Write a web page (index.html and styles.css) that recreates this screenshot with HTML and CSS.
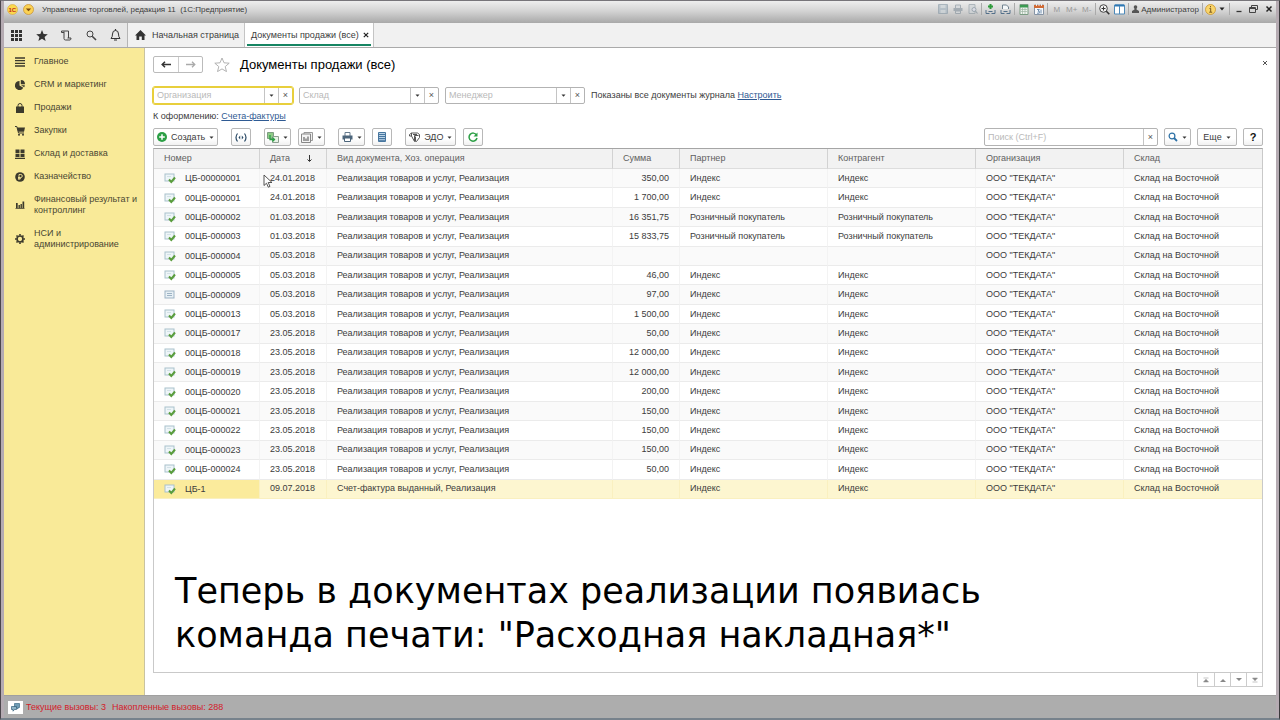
FILE: index.html
```html
<!DOCTYPE html>
<html lang="ru">
<head>
<meta charset="utf-8">
<title>Документы продажи (все)</title>
<link rel="stylesheet" href="styles.css">
</head>
<body>
<svg class="defs" aria-hidden="true">
  <symbol id="doc-posted" viewBox="0 0 12 12">
    <rect x="1" y="2" width="9" height="7" fill="#eef5f8" stroke="#a9c2cc"/>
    <path d="M3 4.500h4" stroke="#d3e1e7"/>
    <path d="M5 7.500l2.300 2.500L11 5.500" fill="none" stroke="#5a9d3c" stroke-width="2"/>
  </symbol>
  <symbol id="doc-plain" viewBox="0 0 12 12">
    <rect x="1" y="2" width="9" height="7" fill="#e8f0f5" stroke="#9db3c4"/>
    <path d="M3 4.500h5M3 6.500h5" stroke="#9db3c4"/>
  </symbol>
  <symbol id="caret" viewBox="0 0 5 3"><path d="M0.500 0.500h4L2.500 2.700z" fill="#333"/></symbol>
</svg>
<div class="window">
  <header class="titlebar">
    <button class="round" aria-label="1С"><svg width="11" height="11" viewBox="0 0 11 11"><circle cx="5.500" cy="5.500" r="5" fill="#fbd84e" stroke="#d9a93a" stroke-width=".6"/><text x="1.500" y="7.500" class="logo-text">1С</text></svg></button>
    <button class="round" aria-label="Главное меню"><svg width="11" height="11" viewBox="0 0 11 11"><circle cx="5.500" cy="5.500" r="5" fill="#fbd253" stroke="#c9963a" stroke-width=".8"/><path d="M2.800 4.500h5.400L5.500 7.300z" fill="#7a4a10"/></svg></button>
    <span class="window-title">Управление торговлей, редакция 11&nbsp; (1С:Предприятие)</span>
    <div class="title-tools">
      <button class="tool dim" aria-label="Сохранить"><svg width="10" height="10" viewBox="0 0 10 10"><path d="M.5.500h9v9h-9z" fill="#9fb0bd" stroke="#8496a4"/><path d="M2.500 1h5v3h-5zM2.500 6h5v3h-5z" fill="#c9d2d8"/></svg></button>
      <button class="tool dim" aria-label="Печать"><svg width="10" height="10" viewBox="0 0 10 10"><path d="M2.500 4V1h5v3M2.500 7h5v2.500h-5z" fill="#d3d8dc" stroke="#82909b"/><path d="M.5 4h9v3h-9z" fill="#82909b"/></svg></button>
      <button class="tool dim" aria-label="Просмотр"><svg width="10" height="10" viewBox="0 0 10 10"><path d="M1 .5h6v9H1z" fill="#cdd3d7" stroke="#8b98a1"/><circle cx="6" cy="5.500" r="2" fill="#dde" stroke="#778995"/><path d="M7.500 7l2 2.500" stroke="#778995" stroke-width="1.200"/></svg></button>
      <i class="sep"></i>
      <button class="tool" aria-label="Добавить ссылку"><svg width="11" height="11" viewBox="0 0 11 11"><path d="M5.500 0v5M3 2.500h5" stroke="#2d9a3a" stroke-width="2"/><path d="M1 6v3.500h3.500M10 6v3.500H6.500M3.500 7.500h4" fill="none" stroke="#54708a"/></svg></button>
      <button class="tool" aria-label="Перейти по ссылке"><svg width="11" height="11" viewBox="0 0 11 11"><path d="M2.500 5V1h4l2 2v2" fill="#f4f7f9" stroke="#71828f"/><path d="M1 6v3.500h3.500M10 6v3.500H6.500M3.500 7.500h4" fill="none" stroke="#54708a"/></svg></button>
      <i class="sep"></i>
      <button class="tool" aria-label="Калькулятор"><svg width="10" height="11" viewBox="0 0 10 11"><path d="M1 .5h8v10H1z" fill="#eef3ee" stroke="#7b9c83"/><path d="M1 1h8v2.500H1z" fill="#3b9a52"/><path d="M2 5.500h6M2 7.500h6M3.500 4v6M6 4v6" stroke="#9fb5a4" stroke-width=".7"/></svg></button>
      <button class="tool" aria-label="Календарь"><svg width="10" height="11" viewBox="0 0 10 11"><path d="M.5 1h9v9.500h-9z" fill="#f6f8fb" stroke="#8694a5"/><path d="M0 1h10v3H0z" fill="#cf6a35"/><path d="M2.500 0v2M5 0v2M7.500 0v2" stroke="#fff" stroke-width=".8"/><path d="M3 5.500h2.300L4 7.200h1.300v2H3M7 5.500v4" fill="none" stroke="#51779f" stroke-width=".8"/></svg></button>
      <i class="sep"></i>
      <button class="tool mem">M</button><button class="tool mem">M+</button><button class="tool mem">M-</button>
      <i class="sep"></i>
      <button class="tool" aria-label="Масштаб"><svg width="11" height="11" viewBox="0 0 11 11"><circle cx="4.500" cy="4.500" r="3.800" fill="#f4f4f4" stroke="#444"/><path d="M2.500 4.500h4M4.500 2.500v4" stroke="#333"/><path d="M7.300 7.300l3 3" stroke="#333" stroke-width="1.600"/></svg></button>
      <button class="tool" aria-label="Панели"><svg width="11" height="11" viewBox="0 0 11 11"><path d="M.5 1h10v9H.5z" fill="#fff" stroke="#4d89b8"/><path d="M1 1.500h9" stroke="#2e78b4" stroke-width="2"/><path d="M5.500 2v8" stroke="#4d89b8"/></svg></button>
      <i class="sep"></i>
      <button class="user"><svg width="7" height="8" viewBox="0 0 7 8"><circle cx="3.500" cy="2" r="1.800" fill="#555"/><path d="M2.500 3h2v1.500L7 6v2H0V6l2.500-1.500z" fill="#555"/></svg>Администратор</button>
      <i class="sep"></i>
      <button class="small-tool" aria-label="Информация"><svg width="11" height="11" viewBox="0 0 11 11"><circle cx="5.500" cy="5.500" r="5" fill="#f9d56b" stroke="#c9962f" stroke-width=".8"/><path d="M4.500 4.500h1.200v3.500M4.200 8.200h3M5.500 2v1.300" fill="none" stroke="#7a5a20"/></svg></button>
      <button class="small-tool" aria-label="Ещё"><svg width="6" height="4" viewBox="0 0 6 4"><path d="M.5.500h5L3 3.500z" fill="#222"/></svg></button>
      <i class="sep"></i>
      <button class="tool" aria-label="Свернуть"><svg width="8" height="8" viewBox="0 0 8 8"><path d="M1.500 6.500h5" stroke="#333" stroke-width="1.300"/></svg></button>
      <button class="tool" aria-label="Восстановить"><svg width="9" height="8" viewBox="0 0 9 8"><path d="M2.500 2.500v-2h6v4h-2M.5 2.500h6v5h-6zM.5 3.500h6" fill="none" stroke="#444"/></svg></button>
      <button class="tool" aria-label="Закрыть окно"><svg width="8" height="8" viewBox="0 0 8 8"><path d="M1.500 1.500l5 5M6.500 1.500l-5 5" stroke="#222" stroke-width="1.500"/></svg></button>
    </div>
  </header>

  <nav class="tabs">
    <div class="quick">
      <button aria-label="Меню функций"><svg width="11" height="11" viewBox="0 0 11 11" fill="#333"><path d="M0 0h3v3H0zM4 0h3v3H4zM8 0h3v3H8zM0 4h3v3H0zM4 4h3v3H4zM8 4h3v3H8zM0 8h3v3H0zM4 8h3v3H4zM8 8h3v3H8z"/></svg></button>
      <button aria-label="Избранное"><svg width="12" height="11" viewBox="0 0 12 11"><path d="M6 0l1.600 3.900 4.200.3-3.200 2.700 1 4.100L6 8.800 2.400 11l1-4.100L.2 4.200l4.200-.3z" fill="#333"/></svg></button>
      <button aria-label="История"><svg width="11" height="11" viewBox="0 0 11 11" fill="none" stroke="#444"><path d="M.5 1H7.500V8M3 1.500V8.500Q3 10 4.500 10H9q1 0 1-2H6.500M.5 1v1.500H3"/></svg></button>
      <button aria-label="Поиск"><svg width="11" height="11" viewBox="0 0 11 11" fill="none" stroke="#444"><circle cx="4" cy="4" r="3"/><path d="M6.200 6.200L10 10" stroke-width="1.600"/></svg></button>
      <button aria-label="Уведомления"><svg width="11" height="12" viewBox="0 0 11 12"><path d="M1 9.500Q2.500 8 2.500 5 2.500 1.500 5.500 1.500T8.500 5Q8.500 8 10 9.500z" fill="none" stroke="#333"/><path d="M5.500 0v1.500M4 11h3" stroke="#333" stroke-width="1.200"/></svg></button>
    </div>
    <a class="tab" href="#home"><svg width="11" height="10" viewBox="0 0 11 10"><path d="M5.500 0L11 5.500H9.500V10H6.800V6.500H4.200V10H1.500V5.500H0z" fill="#333"/></svg>Начальная страница</a>
    <div class="tab active"><a href="#docs">Документы продажи (все)</a><button aria-label="Закрыть вкладку"><svg width="6" height="6" viewBox="0 0 6 6"><path d="M.8.800l4.400 4.400M5.200.800L.8 5.200" stroke="#222" stroke-width="1.200"/></svg></button></div>
  </nav>

  <div class="workspace">
    <aside class="sidebar">
      <a href="#"><svg viewBox="0 0 10 10"><path d="M0 1h10M0 3.700h10M0 6.400h10M0 9h10" stroke="#3c3a2c" stroke-width="1.300"/></svg>Главное</a>
      <a href="#"><svg viewBox="0 0 10 10" fill="#3c3a2c"><path d="M4.500 1v4.500l3.800 2.300A4.500 4.500 0 1 1 4.500 1z"/><path d="M5.800 0A4.300 4.300 0 0 1 10 4.300H5.800zM6 5.300h3.800q0 1-.6 1.900z"/></svg>CRM и маркетинг</a>
      <a href="#"><svg viewBox="0 0 10 10"><path d="M1 3.500h8V10H1z" fill="#3c3a2c"/><path d="M3 5V2.500q0-2 2-2t2 2V5" fill="none" stroke="#3c3a2c"/></svg>Продажи</a>
      <a href="#"><svg viewBox="0 0 10 10"><path d="M0 .5h1.800L3.500 7H9" fill="none" stroke="#3c3a2c"/><path d="M2 1.500h8L9 5.800H3.200z" fill="#3c3a2c"/><circle cx="4" cy="8.800" r="1" fill="#3c3a2c"/><circle cx="8" cy="8.800" r="1" fill="#3c3a2c"/></svg>Закупки</a>
      <a href="#"><svg viewBox="0 0 10 10" fill="#3c3a2c"><path d="M.5.500h4v3.700h-4zM5.500.500h4v3.700h-4zM.5 5h4v3h-4zM5.500 5h4v3h-4zM0 8.800h10V10H0z"/></svg>Склад и доставка</a>
      <a href="#"><svg viewBox="0 0 10 10"><circle cx="5" cy="5" r="4.800" fill="#3c3a2c"/><path d="M4 8V2.500h1.800a1.400 1.400 0 0 1 0 3H3M3 6.700h3" fill="none" stroke="#f9ea98" stroke-width=".9"/></svg>Казначейство</a>
      <a href="#"><svg viewBox="0 0 10 10" fill="#3c3a2c"><path d="M1 3h1.700v5H1zM3.500 5h1.400v3H3.500zM5.500 4h1.400v4H5.500zM7.500 1.500h1.700V8H7.500zM.5 8.200h9v.8h-9z"/></svg>Финансовый результат и контроллинг</a>
      <a href="#"><svg viewBox="0 0 10 10" fill="none" stroke="#3c3a2c"><circle cx="5" cy="5" r="3" stroke-width="1.700"/><path d="M5 0v1.500M5 8.500V10M0 5h1.500M8.500 5H10M1.500 1.500l1 1M7.500 7.500l1 1M8.500 1.500l-1 1M1.500 8.500l1-1" stroke-width="1.600"/></svg>НСИ и администрирование</a>
    </aside>

    <main class="content">
      <div class="heading">
        <div class="history">
          <button aria-label="Назад"><svg width="10" height="7" viewBox="0 0 10 7"><path d="M10 3.500H2M4 .8L1.200 3.500 4 6.200" fill="none" stroke="#333" stroke-width="1.500"/></svg></button><button aria-label="Вперёд"><svg width="10" height="7" viewBox="0 0 10 7"><path d="M0 3.500h8M6 .8l2.800 2.700L6 6.200" fill="none" stroke="#aaa" stroke-width="1.300"/></svg></button>
        </div>
        <button class="star" aria-label="В избранное"><svg width="16" height="15" viewBox="0 0 16 15"><path d="M8 1l2 4.800 5.200.4-4 3.400 1.300 5L8 11.900 3.500 14.600l1.300-5-4-3.400 5.200-.4z" fill="#fff" stroke="#aaa" stroke-width=".9"/></svg></button>
        <h1>Документы продажи (все)</h1>
        <button class="close-form" aria-label="Закрыть"><svg width="6" height="6" viewBox="0 0 6 6"><path d="M1 1l4 4M5 1L1 5" stroke="#555"/></svg></button>
      </div>

      <div class="filters">
        <div class="combo focused"><input type="text" placeholder="Организация" aria-label="Организация"><button aria-label="Выбрать организацию"><svg width="5" height="3"><use href="#caret"/></svg></button><button aria-label="Очистить организацию">×</button></div>
        <div class="combo"><input type="text" placeholder="Склад" aria-label="Склад"><button aria-label="Выбрать склад"><svg width="5" height="3"><use href="#caret"/></svg></button><button aria-label="Очистить склад">×</button></div>
        <div class="combo"><input type="text" placeholder="Менеджер" aria-label="Менеджер"><button aria-label="Выбрать менеджера"><svg width="5" height="3"><use href="#caret"/></svg></button><button aria-label="Очистить менеджера">×</button></div>
        <span>Показаны все документы журнала <a href="#">Настроить</a></span>
      </div>

      <div class="pending">К оформлению: <a href="#">Счета-фактуры</a></div>

      <div class="commands">
        <div class="group"><button class="btn create"><svg width="10" height="10" viewBox="0 0 10 10"><circle cx="5" cy="5" r="5" fill="#2c9f45"/><path d="M5 2.200v5.600M2.200 5h5.600" stroke="#fff" stroke-width="1.500"/></svg>Создать<svg width="5" height="3"><use href="#caret"/></svg></button></div>
        <div class="group"><button class="btn square" aria-label="Обмен"><svg width="12" height="9" viewBox="0 0 12 9" fill="none" stroke="#2a4a66"><path d="M2.500.500Q-.5 4.500 2.500 8.500M9.500.500q3 4 0 8" stroke-width="1.200"/><path d="M3.500 4.500L5.200 2.500v4zM8.500 4.500L6.800 2.500v4z" fill="#2a4a66" stroke="none"/></svg></button></div>
        <div class="group">
          <button class="btn drop" aria-label="Создать на основании"><svg width="12" height="11" viewBox="0 0 12 11"><path d="M.5.500h6v6h-6z" fill="#8ecb86" stroke="#7c9d80"/><path d="M5.500 4.500h6v6h-6z" fill="#e9f3e7" stroke="#8d9f90"/><path d="M3 3v4.500h4M5.500 5.500l2 2-2 2" fill="none" stroke="#2c9f45" stroke-width="1.300"/></svg><svg width="5" height="3"><use href="#caret"/></svg></button>
          <button class="btn drop" aria-label="Отчеты"><svg width="12" height="11" viewBox="0 0 12 11"><path d="M3 2V.500h8.500v8H10" fill="#eee" stroke="#999"/><path d="M.5 2h9v8.500h-9z" fill="#f4f4f4" stroke="#888"/><path d="M3 5v4M5 6.500V9M7 4.500V9" stroke="#666" stroke-width="1.200"/></svg><svg width="5" height="3"><use href="#caret"/></svg></button>
        </div>
        <div class="group">
          <button class="btn drop" aria-label="Печать"><svg width="11" height="10" viewBox="0 0 11 10"><path d="M3 4V.500h5V4" fill="#fff" stroke="#667b8d"/><path d="M.5 3.500h10v4H.5z" fill="#4c657b"/><path d="M2.500 6h6v3.500h-6z" fill="#fff" stroke="#4c657b"/></svg><svg width="5" height="3"><use href="#caret"/></svg></button>
          <button class="btn square" aria-label="Реестр"><svg width="8" height="10" viewBox="0 0 8 10"><path d="M.5.500h7v9h-7z" fill="#bcd3e6" stroke="#47769f"/><path d="M1 2.500h6M1 4.500h6M1 6.500h6M1 8.300h6" stroke="#47769f"/></svg></button>
        </div>
        <div class="group">
          <button class="btn edo"><svg width="11" height="11" viewBox="0 0 11 11" fill="none" stroke="#555"><path d="M.5 2.500l2-1.500h6l2 1.500v3l-3 4h-1v-5M2.500 1v3h-2v-1.500M2.500 4l3 5.500v-6h4M4 2.500h4"/></svg>ЭДО<svg width="5" height="3"><use href="#caret"/></svg></button>
          <button class="btn square" aria-label="Обновить"><svg width="10" height="10" viewBox="0 0 10 10"><path d="M8.500 3A4 4 0 1 0 9 6" fill="none" stroke="#2c9f45" stroke-width="1.500"/><path d="M9.500.500v4h-4z" fill="#2c9f45"/></svg></button>
        </div>
        <div class="group right">
          <div class="combo search"><input type="search" placeholder="Поиск (Ctrl+F)" aria-label="Поиск"><button aria-label="Очистить поиск">×</button></div>
          <button class="btn drop" aria-label="Найти"><svg width="10" height="10" viewBox="0 0 10 10" fill="none" stroke="#2d71a6"><circle cx="4" cy="4" r="2.900" stroke-width="1.200"/><path d="M6 6l3 3" stroke-width="1.800"/></svg><svg width="5" height="3"><use href="#caret"/></svg></button>
          <button class="btn more">Еще<svg width="5" height="3"><use href="#caret"/></svg></button>
          <button class="btn square help">?</button>
        </div>
      </div>

      <section class="list">
        <table>
          <colgroup><col class="c-num"><col class="c-date"><col class="c-kind"><col class="c-sum"><col class="c-party"><col class="c-party"><col class="c-party"><col></colgroup>
          <thead><tr><th>Номер</th><th>Дата<svg class="sort" width="5" height="8" viewBox="0 0 5 8"><path d="M2.500 0v6M.5 4.500l2 2 2-2" fill="none" stroke="#333"/></svg></th><th>Вид документа, Хоз. операция</th><th>Сумма</th><th>Партнер</th><th>Контрагент</th><th>Организация</th><th>Склад</th></tr></thead>
          <tbody>
            <tr><td><svg><use href="#doc-posted"/></svg>ЦБ-00000001</td><td>24.01.2018</td><td>Реализация товаров и услуг, Реализация</td><td>350,00</td><td>Индекс</td><td>Индекс</td><td>ООО "ТЕКДАТА"</td><td>Склад на Восточной</td></tr>
            <tr><td><svg><use href="#doc-posted"/></svg>00ЦБ-000001</td><td>24.01.2018</td><td>Реализация товаров и услуг, Реализация</td><td>1 700,00</td><td>Индекс</td><td>Индекс</td><td>ООО "ТЕКДАТА"</td><td>Склад на Восточной</td></tr>
            <tr><td><svg><use href="#doc-posted"/></svg>00ЦБ-000002</td><td>01.03.2018</td><td>Реализация товаров и услуг, Реализация</td><td>16 351,75</td><td>Розничный покупатель</td><td>Розничный покупатель</td><td>ООО "ТЕКДАТА"</td><td>Склад на Восточной</td></tr>
            <tr><td><svg><use href="#doc-posted"/></svg>00ЦБ-000003</td><td>01.03.2018</td><td>Реализация товаров и услуг, Реализация</td><td>15 833,75</td><td>Розничный покупатель</td><td>Розничный покупатель</td><td>ООО "ТЕКДАТА"</td><td>Склад на Восточной</td></tr>
            <tr><td><svg><use href="#doc-posted"/></svg>00ЦБ-000004</td><td>05.03.2018</td><td>Реализация товаров и услуг, Реализация</td><td></td><td></td><td></td><td>ООО "ТЕКДАТА"</td><td>Склад на Восточной</td></tr>
            <tr><td><svg><use href="#doc-posted"/></svg>00ЦБ-000005</td><td>05.03.2018</td><td>Реализация товаров и услуг, Реализация</td><td>46,00</td><td>Индекс</td><td>Индекс</td><td>ООО "ТЕКДАТА"</td><td>Склад на Восточной</td></tr>
            <tr><td><svg><use href="#doc-plain"/></svg>00ЦБ-000009</td><td>05.03.2018</td><td>Реализация товаров и услуг, Реализация</td><td>97,00</td><td>Индекс</td><td>Индекс</td><td>ООО "ТЕКДАТА"</td><td>Склад на Восточной</td></tr>
            <tr><td><svg><use href="#doc-posted"/></svg>00ЦБ-000013</td><td>05.03.2018</td><td>Реализация товаров и услуг, Реализация</td><td>1 500,00</td><td>Индекс</td><td>Индекс</td><td>ООО "ТЕКДАТА"</td><td>Склад на Восточной</td></tr>
            <tr><td><svg><use href="#doc-posted"/></svg>00ЦБ-000017</td><td>23.05.2018</td><td>Реализация товаров и услуг, Реализация</td><td>50,00</td><td>Индекс</td><td>Индекс</td><td>ООО "ТЕКДАТА"</td><td>Склад на Восточной</td></tr>
            <tr><td><svg><use href="#doc-posted"/></svg>00ЦБ-000018</td><td>23.05.2018</td><td>Реализация товаров и услуг, Реализация</td><td>12 000,00</td><td>Индекс</td><td>Индекс</td><td>ООО "ТЕКДАТА"</td><td>Склад на Восточной</td></tr>
            <tr><td><svg><use href="#doc-posted"/></svg>00ЦБ-000019</td><td>23.05.2018</td><td>Реализация товаров и услуг, Реализация</td><td>12 000,00</td><td>Индекс</td><td>Индекс</td><td>ООО "ТЕКДАТА"</td><td>Склад на Восточной</td></tr>
            <tr><td><svg><use href="#doc-posted"/></svg>00ЦБ-000020</td><td>23.05.2018</td><td>Реализация товаров и услуг, Реализация</td><td>200,00</td><td>Индекс</td><td>Индекс</td><td>ООО "ТЕКДАТА"</td><td>Склад на Восточной</td></tr>
            <tr><td><svg><use href="#doc-posted"/></svg>00ЦБ-000021</td><td>23.05.2018</td><td>Реализация товаров и услуг, Реализация</td><td>150,00</td><td>Индекс</td><td>Индекс</td><td>ООО "ТЕКДАТА"</td><td>Склад на Восточной</td></tr>
            <tr><td><svg><use href="#doc-posted"/></svg>00ЦБ-000022</td><td>23.05.2018</td><td>Реализация товаров и услуг, Реализация</td><td>150,00</td><td>Индекс</td><td>Индекс</td><td>ООО "ТЕКДАТА"</td><td>Склад на Восточной</td></tr>
            <tr><td><svg><use href="#doc-posted"/></svg>00ЦБ-000023</td><td>23.05.2018</td><td>Реализация товаров и услуг, Реализация</td><td>150,00</td><td>Индекс</td><td>Индекс</td><td>ООО "ТЕКДАТА"</td><td>Склад на Восточной</td></tr>
            <tr><td><svg><use href="#doc-posted"/></svg>00ЦБ-000024</td><td>23.05.2018</td><td>Реализация товаров и услуг, Реализация</td><td>50,00</td><td>Индекс</td><td>Индекс</td><td>ООО "ТЕКДАТА"</td><td>Склад на Восточной</td></tr>
            <tr class="selected"><td><svg><use href="#doc-posted"/></svg>ЦБ-1</td><td>09.07.2018</td><td>Счет-фактура выданный, Реализация</td><td></td><td>Индекс</td><td>Индекс</td><td>ООО "ТЕКДАТА"</td><td>Склад на Восточной</td></tr>
          </tbody>
        </table>
        <p class="caption">Теперь в документах реализации появиась<br>команда печати: "Расходная накладная*"</p>
        <svg class="cursor" width="10" height="14" viewBox="0 0 10 14"><path d="M1 1v10.500l2.500-2.300 1.800 4 1.700-.8-1.800-3.900H9z" fill="#fff" stroke="#444" stroke-width=".9"/></svg>
      </section>

      <div class="pager">
        <button aria-label="В начало"><svg width="8" height="6" viewBox="0 0 8 6"><path d="M1.500 1h5M1.500 5h5L4 2.200z" fill="#888" stroke="#888" stroke-width=".5"/></svg></button>
        <button aria-label="Вверх"><svg width="8" height="6" viewBox="0 0 8 6"><path d="M1 5h6L4 2z" fill="#888"/></svg></button>
        <button aria-label="Вниз"><svg width="8" height="6" viewBox="0 0 8 6"><path d="M1 1h6L4 4z" fill="#888"/></svg></button>
        <button aria-label="В конец"><svg width="8" height="6" viewBox="0 0 8 6"><path d="M1.500 5h5M1.500 1h5L4 3.800z" fill="#888" stroke="#888" stroke-width=".5"/></svg></button>
      </div>
    </main>
  </div>

  <footer class="status">
    <button aria-label="Вызовы сервера"><svg width="11" height="10" viewBox="0 0 11 10"><path d="M4.500 1.500h5v4h-1.500v1.500l-2-1.500h-1.500z" fill="#6f9cb5" stroke="#3d6d88" stroke-width=".7"/><path d="M1.500 4.500h5v3H4.500L3 9.200V7.500H1.500z" fill="#8fb4c7" stroke="#305d78" stroke-width=".7"/></svg></button>
    <span>Текущие вызовы: 3</span><span>Накопленные вызовы: 288</span>
  </footer>
</div>
</body>
</html>
```
FILE: styles.css
```css
* { box-sizing: border-box; }
body {
  margin: 0;
  font-family: "Liberation Sans", Arial, sans-serif;
  font-size: 9px;
  line-height: 11px;
  color: #3c3c3c;
}
button { font: inherit; color: inherit; background: none; border: 0; padding: 0; display: flex; align-items: center; justify-content: center; }
a { color: inherit; text-decoration: none; }
svg { display: block; flex: none; }
.defs { position: absolute; width: 0; height: 0; }

.window {
  display: flex;
  flex-direction: column;
  min-height: 100vh;
  border: solid;
  border-width: 1px 1px 2px;
  border-color: #77757a #3a3a3c #77828c #4c464c;
  background: #b5abb2;
  padding: 0 3px;
}

/* Title bar */
.titlebar {
  display: flex;
  align-items: center;
  height: 22px;
  padding-bottom: 6px;
  background: linear-gradient(#eee, #d4d4d4 45%, #a9a9a9);
  font-size: 8px;
}
.round { width: 16px; }
.round + .round { width: 17px; }
.logo-text { font: bold 6px "Liberation Sans", Arial, sans-serif; fill: #c22a1c; }
.window-title { margin-left: 5px; }
.title-tools { display: flex; align-items: center; margin-left: auto; }
.tool { width: 15px; height: 14px; }
.dim { opacity: .6; }
.mem { color: #999; }
.sep { width: 1px; height: 12px; margin: 0 1px; background: #aaa; }
.user { gap: 2px; margin: 0 2px; }
.small-tool { width: 12px; }

/* Tabs */
.tabs { display: flex; height: 25px; background: #f1f1f1; border-bottom: 1px solid #aaa; }
.quick { display: flex; background: #e7e7e7; border-right: 1px solid #b5b5b5; }
.quick button { width: 25px; }
.quick button:last-child { width: 23px; }
.tab { display: flex; align-items: center; padding: 0 5px 0 7px; gap: 6px; }
.tab.active {
  position: relative;
  background: #fff;
  border: solid #c4c4c4;
  border-width: 0 1px;
  padding: 0 4px 0 6px;
  gap: 4px;
}
.tab.active::after { content: ""; position: absolute; left: 2px; right: 2px; bottom: 1px; height: 2px; background: #168563; }

.workspace { display: flex; flex: 1; }

/* Section panel */
.sidebar { flex: none; width: 141px; background: #f9ea98; border-right: 1px solid #c9c3a0; padding-top: 2px; color: #4a4733; }
.sidebar a { display: flex; align-items: center; gap: 9px; padding: 6px 4px 6px 11px; }
.sidebar svg { width: 10px; height: 10px; }

/* Form */
.content { flex: 1; min-width: 0; display: flex; flex-direction: column; background: #fff; padding: 8px 13px 8px 8px; }
.heading { display: flex; align-items: center; height: 17px; margin-bottom: 14px; }
.history { display: flex; border: 1px solid #bbb; border-radius: 2px; }
.history button { width: 24px; height: 15px; }
.history button + button { border-left: 1px solid #ccc; }
.star { margin: 0 10px 0 11px; }
h1 { margin: 0; font-size: 13px; line-height: 17px; font-weight: normal; color: #000; }
.close-form { margin: 0 -5px 4px auto; }

.filters { display: flex; align-items: center; gap: 6px; margin-bottom: 5px; }
.combo { display: flex; width: 140px; height: 17px; border: 1px solid #b3b3b3; border-radius: 2px; background: #fff; }
.combo.focused { border-color: #e8cf3c; outline: 1px solid #e8cf3c; }
.combo input { flex: 1; min-width: 0; border: 0; outline: 0; padding: 0 3px; background: none; font: inherit; color: inherit; appearance: none; }
.combo input::placeholder { color: #b9b9b9; opacity: 1; }
.combo button { width: 14px; border-left: 1px solid #c4c4c4; color: #555; }
.filters a, .pending a { color: #2f5a93; text-decoration: underline; }

.pending { line-height: 14px; margin-bottom: 5px; }

.commands { display: flex; gap: 13px; margin-bottom: 2px; }
.group { display: flex; gap: 7px; }
.right { margin-left: auto; gap: 6px; }
.btn { height: 18px; gap: 4px; border: 1px solid #b8b8b8; border-radius: 2px; background: linear-gradient(#fff 60%, #f1f1f1); }
.create, .edo { padding: 0 3px; }
.square { width: 20px; }
.drop { width: 27px; }
.more { width: 40px; }
.help { font-size: 11px; color: #111; font-weight: bold; }
.search { width: 174px; height: 18px; }

.list { position: relative; flex: 1; border: 1px solid #c9c9c9; border-top-color: #a5a5a5; }
table { width: 100%; height: 350px; table-layout: fixed; border-collapse: separate; border-spacing: 0; }
.c-num { width: 106px; }
.c-date { width: 67px; }
.c-kind { width: 286px; }
.c-sum { width: 67px; }
.c-party { width: 148px; }
th { height: 20px; padding: 0 10px; background: #f2f2f2; font-weight: normal; text-align: left; color: #606060; border-right: 1px solid #d2d2d2; border-bottom: 1px solid #ddd; white-space: nowrap; }
td { padding: 0 10px; border-bottom: 1px solid #ebebeb; border-right: 1px solid #f3f3f3; white-space: nowrap; }
th:last-child, td:last-child { border-right: 0; }
tbody tr:nth-child(odd) { background: #fafafa; }
td:nth-child(4) { text-align: right; }
td svg { display: inline-block; width: 12px; height: 12px; margin-right: 9px; vertical-align: -3px; }
.sort { display: inline-block; margin-left: 17px; vertical-align: middle; }
tbody tr.selected { background: #fdf6d0; }
.selected td { border-right-color: #faf0c0; border-bottom-color: #faf0c0; }
.selected td:first-child { background: #fbeb9c; }

.caption { position: absolute; left: 21px; bottom: 15px; margin: 0; font: 35px/44px "DejaVu Sans", Verdana, sans-serif; color: #000; }
.cursor { position: absolute; left: 109px; top: 25px; }

.pager { display: flex; align-self: flex-end; border: 1px solid #ccc; border-top: 0; }
.pager button { width: 16px; height: 13px; }
.pager button + button { border-left: 1px solid #ccc; }

/* Status bar */
.status { display: flex; align-items: center; height: 23px; gap: 6px; padding-left: 4px; background: #adadad; border-top: 1px solid #a0a0a0; color: #d3202a; }
.status button { width: 15px; height: 13px; margin-right: -3px; background: #fff; }
```
